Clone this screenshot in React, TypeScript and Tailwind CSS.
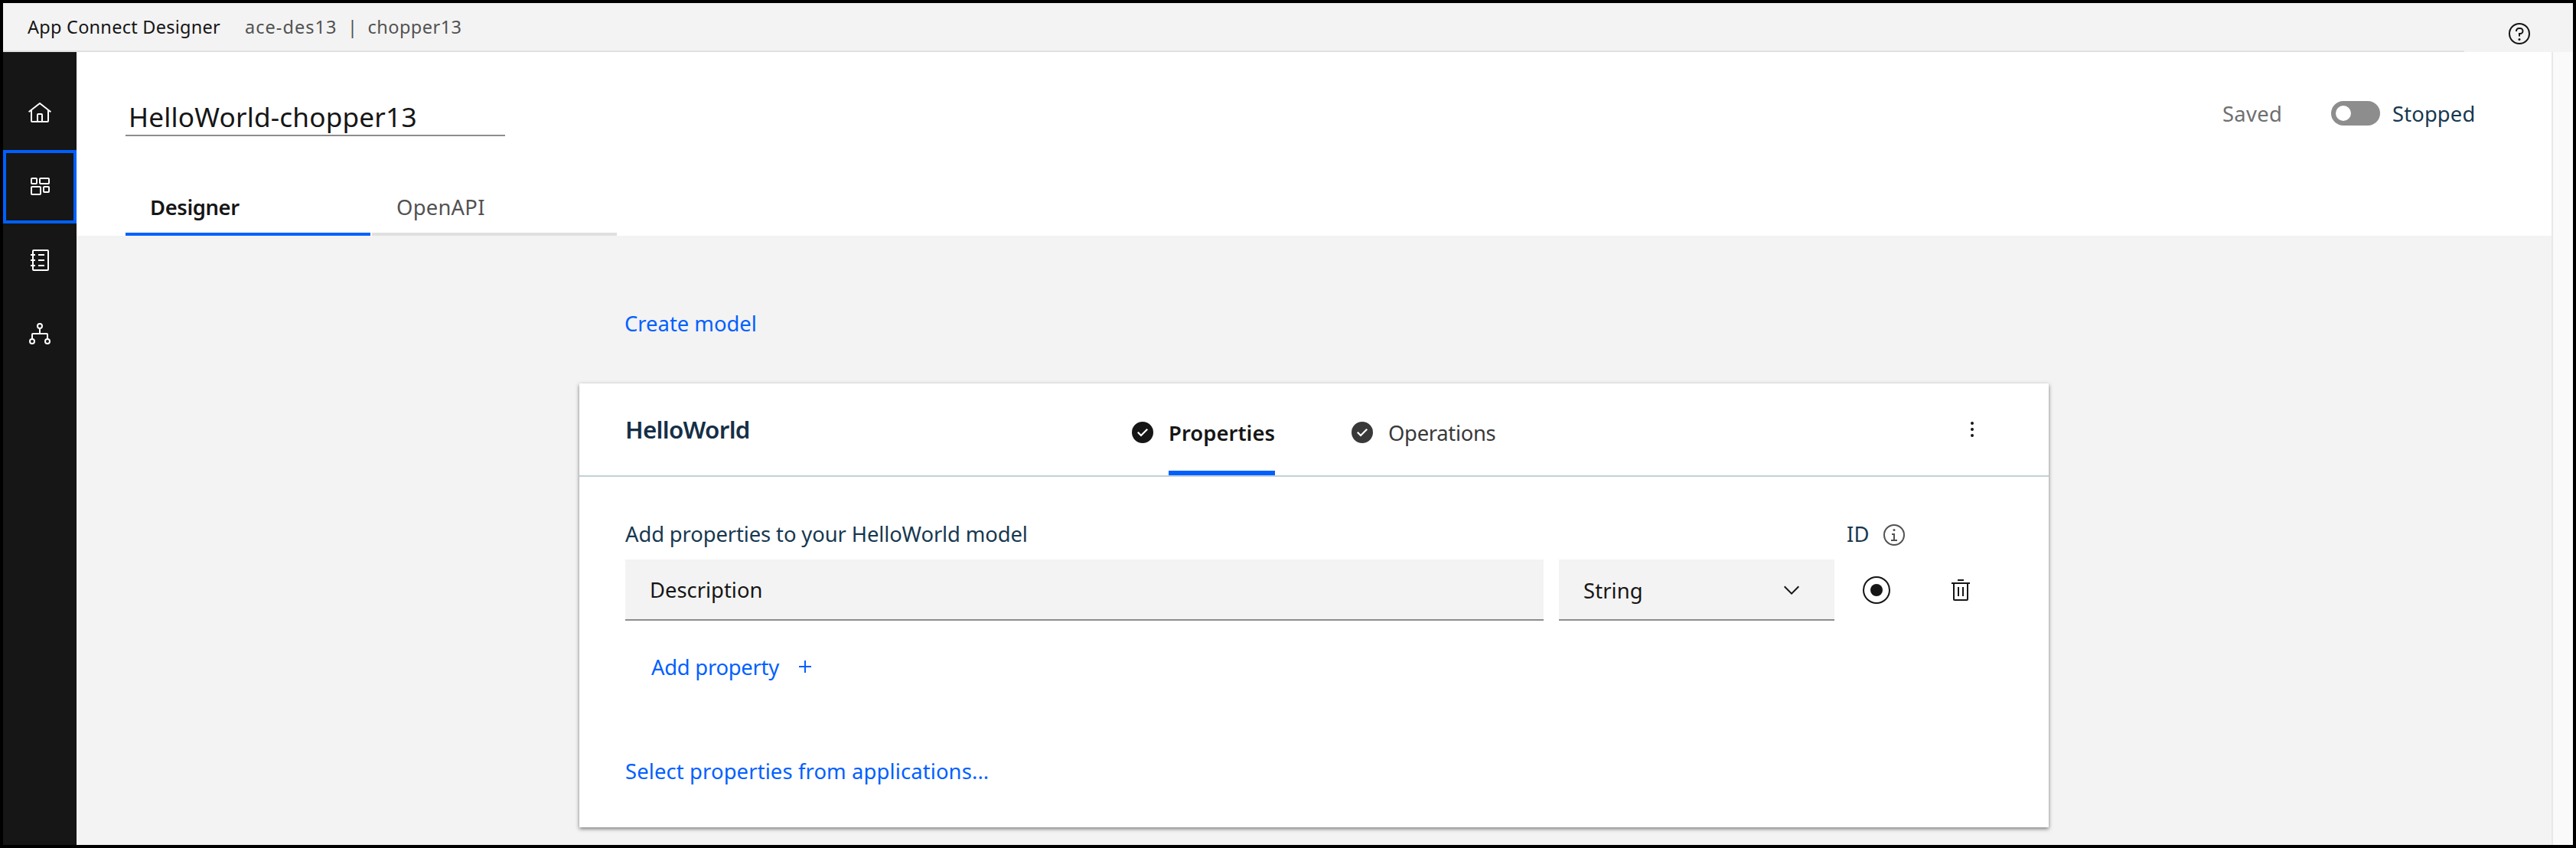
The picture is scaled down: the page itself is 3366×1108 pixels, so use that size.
import type { ReactNode } from 'react';

function Icon({ className = '', children }: { className?: string; children: ReactNode }) {
  return (
    <svg viewBox="0 0 32 32" className={`block size-8 shrink-0 ${className}`} fill="currentColor">
      {children}
    </svg>
  );
}

const HomeIcon = () => (
  <Icon>
    <path d="M16.6123,2.2138a1.01,1.01,0,0,0-1.2427,0L1,13.4194l1.2427,1.5717L4,13.6210V26a2.0041,2.0041,0,0,0,2,2H26a2.0037,2.0037,0,0,0,2-2V13.63L29.7573,15,31,13.4282ZM18,26H14V18h4Zm2,0V18a2.0023,2.0023,0,0,0-2-2H14a2.002,2.002,0,0,0-2,2v8H6V12.0615l10-7.79,10,7.8005V26Z" />
  </Icon>
);

const WorkspaceIcon = () => (
  <Icon>
    <g fill="none" stroke="currentColor" strokeWidth="2">
      <rect x="5" y="5" width="7" height="7" rx="1" />
      <rect x="16" y="5" width="12" height="7" rx="1" />
      <rect x="5" y="16" width="12" height="10" rx="1" />
      <rect x="21" y="16" width="7" height="7" rx="1" />
    </g>
  </Icon>
);

const CatalogIcon = () => (
  <Icon>
    <g fill="none" stroke="currentColor" strokeWidth="2">
      <rect x="7" y="3" width="20" height="26" rx="1" />
      <path d="M4 9h6M4 16h6M4 23h6M14 9h8M14 16h8M14 23h8" />
    </g>
  </Icon>
);

const TreeIcon = () => (
  <Icon>
    <g fill="none" stroke="currentColor" strokeWidth="2">
      <circle cx="16" cy="6" r="3" />
      <circle cx="6" cy="26" r="3" />
      <circle cx="26" cy="26" r="3" />
      <path d="M16 9v7M6 23v-6a1 1 0 0 1 1-1h18a1 1 0 0 1 1 1v6" />
    </g>
  </Icon>
);

const HelpIcon = () => (
  <Icon>
    <circle cx="16" cy="16" r="13" fill="none" stroke="currentColor" strokeWidth="2" />
    <circle cx="16" cy="23.5" r="1.5" />
    <path d="M17,8H15.5A4.49,4.49,0,0,0,11,12.5V13h2v-.5A2.5,2.5,0,0,1,15.5,10H17a2.5,2.5,0,0,1,0,5H15v4.5h2V17a4.5,4.5,0,0,0,0-9Z" />
  </Icon>
);

const InfoIcon = () => (
  <Icon>
    <circle cx="16" cy="16" r="13" fill="none" stroke="currentColor" strokeWidth="2" />
    <circle cx="16" cy="9.5" r="1.5" />
    <path d="M17 22v-8h-4v2h2v6h-3v2h8v-2z" />
  </Icon>
);

const CheckIcon = () => (
  <Icon>
    <path d="M16,2A14,14,0,1,0,30,16,14,14,0,0,0,16,2ZM14,21.5908l-5-5L10.5906,15,14,18.4092,21.41,11l1.5957,1.5859Z" />
  </Icon>
);

const OverflowIcon = () => (
  <Icon>
    <circle cx="16" cy="8" r="2" />
    <circle cx="16" cy="16" r="2" />
    <circle cx="16" cy="24" r="2" />
  </Icon>
);

const ChevronIcon = () => (
  <Icon>
    <path d="M16 22L6 12 7.4 10.6 16 19.2 24.6 10.6 26 12z" />
  </Icon>
);

const TrashIcon = () => (
  <Icon>
    <path d="M12 12h2v12h-2zM18 12h2v12h-2z" />
    <path d="M4 6v2h2v20a2 2 0 0 0 2 2h16a2 2 0 0 0 2-2V8h2V6zM8 28V8h16v20zM12 2h8v2h-8z" />
  </Icon>
);

const PlusIcon = () => (
  <Icon>
    <path d="M17 15V8h-2v7H8v2h7v7h2v-7h7v-2z" />
  </Icon>
);

function NavItem({ active = false, children }: { active?: boolean; children: ReactNode }) {
  return (
    <a className={`flex h-24 items-center justify-center ${active ? 'border-4 border-[#0060ff]' : ''}`}>{children}</a>
  );
}

function Header() {
  return (
    <header className="flex h-16 bg-[#f3f3f3]">
      <div className="flex w-[3216px] border-b-2 border-[#e0e0e0] pt-[15px] pl-8 text-[23.5px] leading-8 text-[#525252]">
        <span className="w-[284px] tracking-[0.25px] text-[#161616]">App Connect Designer</span>
        <span className="w-[134px] tracking-[1.05px]">ace-des13</span>
        <span className="w-[26.5px]">|</span>
        <span className="tracking-[0.47px]">chopper13</span>
      </div>
      <div className="pt-6 pl-14 text-[#161616]">
        <HelpIcon />
      </div>
    </header>
  );
}

function Card() {
  return (
    <section className="h-[580px] w-[1920px] bg-white shadow-[0_2px_5px_rgba(0,0,0,0.5)]">
      <div className="flex h-[122px] border-b-2 border-[#c3d1d1] pl-15">
        <h2 className="w-[660px] pt-10 text-[31.3px] leading-10 font-semibold tracking-[-0.68px] text-[#152f47]">
          HelloWorld
        </h2>
        <div className="flex w-[287px] text-[#161616]">
          <div className="w-[50px] pt-12">
            <CheckIcon />
          </div>
          <div className="h-[120px] w-[139px] border-b-6 border-[#0060ff] pt-[46px]">
            <span className="block font-semibold tracking-[0.05px] whitespace-nowrap">Properties</span>
          </div>
        </div>
        <div className="flex w-[797px] text-[#393939]">
          <div className="w-[50px] pt-12">
            <CheckIcon />
          </div>
          <span className="pt-[46px] tracking-[-0.3px]">Operations</span>
        </div>
        <div className="pt-11 text-[#161616]">
          <OverflowIcon />
        </div>
      </div>

      <div className="pt-14 pl-15">
        <div className="flex h-9 text-[#173850]">
          <span className="w-[1596px] tracking-[-0.11px]">Add properties to your HelloWorld model</span>
          <span className="w-[46px] tracking-[0.2px]">ID</span>
          <span className="pt-1 text-[#525252]">
            <InfoIcon />
          </span>
        </div>

        <div className="mt-4 flex h-20 text-[#161616]">
          <div className="w-[1200px] border-b-2 border-[#8d8d8d] bg-[#f3f3f3] pt-[21px] pl-8">Description</div>
          <div className="ml-5 flex w-[360px] justify-between border-b-2 border-[#8d8d8d] bg-[#f3f3f3] pr-10 pl-8">
            <span className="pt-[22px] tracking-[0.1px]">String</span>
            <span className="pt-6">
              <ChevronIcon />
            </span>
          </div>
          <div className="mt-[22px] ml-[37px] flex size-9 items-center justify-center rounded-full border-2 border-[#161616]">
            <span className="size-4 rounded-full bg-[#161616]" />
          </div>
          <div className="ml-[76px] pt-6">
            <TrashIcon />
          </div>
        </div>

        <div className="mt-[42px] flex h-9 pl-[34px] text-[#0060ff]">
          <span className="w-[185px] tracking-[-0.25px]">Add property</span>
          <span className="pt-0.5">
            <PlusIcon />
          </span>
        </div>

        <div className="mt-[100px] tracking-[0.13px] text-[#0060ff]">Select properties from applications...</div>
      </div>
    </section>
  );
}

export default function App() {
  return (
    <div className="flex h-[1108px] w-[3366px] flex-col overflow-hidden border-4 border-black bg-[#f3f3f3] font-['Noto_Sans',sans-serif] text-[27.4px] leading-[38px]">
      <Header />
      <div className="flex min-h-0 flex-1">
        <nav className="w-24 bg-[#161616] pt-8 text-white">
          <NavItem>
            <HomeIcon />
          </NavItem>
          <NavItem active>
            <WorkspaceIcon />
          </NavItem>
          <NavItem>
            <CatalogIcon />
          </NavItem>
          <NavItem>
            <TreeIcon />
          </NavItem>
        </nav>

        <main className="w-[3234px]">
          <div className="h-60 bg-white pt-15 pl-16">
            <div className="flex h-[50px] justify-between">
              <div className="w-[496px] border-b-2 border-[#8d8d8d] pl-1 text-[35.2px] leading-12 tracking-[0.18px] text-[#161616]">
                HelloWorld-chopper13
              </div>
              <div className="flex w-[430px] pt-0.5">
                <span className="w-[142px] tracking-[0.3px] text-[#6f6f6f]">Saved</span>
                <span className="mt-0.5 flex h-8 w-16 items-center rounded-full bg-[#8d8d8d] pl-1.5">
                  <span className="size-5 rounded-full bg-white" />
                </span>
                <span className="ml-4 tracking-[0.13px] text-[#173850]">Stopped</span>
              </div>
            </div>
            <div className="mt-[74px] flex gap-0.5">
              <div className="h-14 w-80 border-b-4 border-[#0060ff] pl-8 font-semibold tracking-[-0.4px] text-[#161616]">
                Designer
              </div>
              <div className="h-14 w-80 border-b-4 border-[#e0e0e0] pl-8 tracking-[0.25px] text-[#525252]">OpenAPI</div>
            </div>
          </div>

          <div className="pt-24 pl-[657px]">
            <div className="mb-[59px] pl-[59px] text-[#0060ff]">Create model</div>
            <Card />
          </div>
        </main>

        <div className="w-[28px] border-l-2 border-[#e8e8e8] bg-[#fafafa]" />
      </div>
    </div>
  );
}
